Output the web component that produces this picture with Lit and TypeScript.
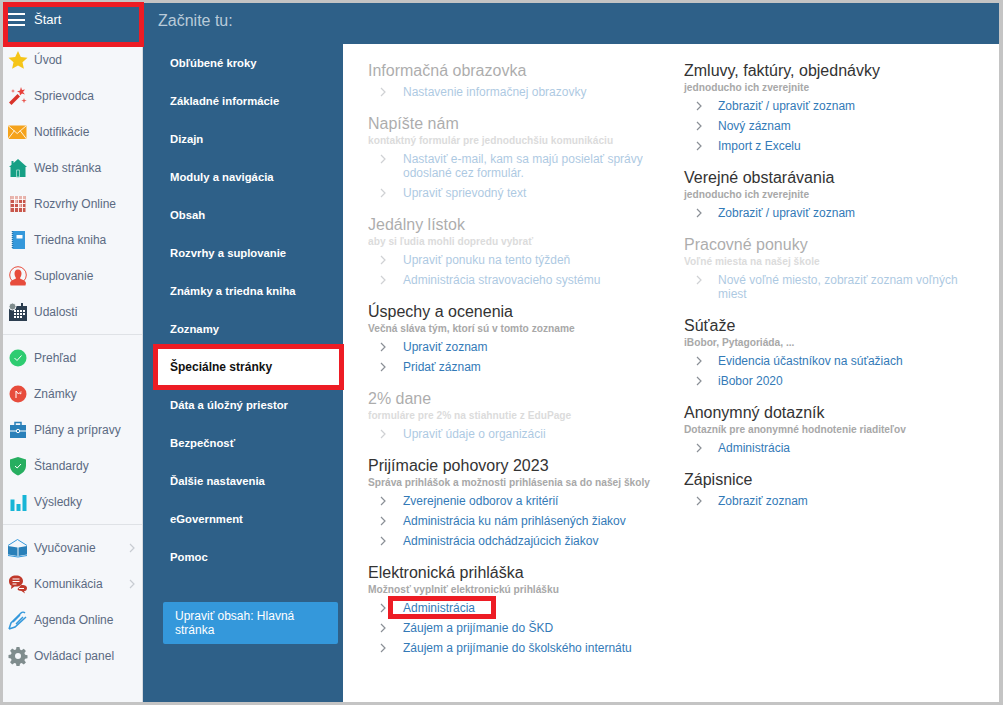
import { LitElement, html, css, svg } from "lit";
import { customElement } from "lit/decorators.js";

const ic: Record<string, unknown> = {
  star: svg`<path fill="#f5c518" d="M10 1l2.800 6 6.700.7-5 4.500 1.400 6.600L10 15.500 4.100 18.800l1.400-6.600-5-4.500 6.700-.7z"/>`,
  wand: svg`<path fill="#d9342b" d="M1 16.500l8.500-8.500 2.500 2.500-8.500 8.500z"/><path fill="#e8403a" d="M13 1l1 3 3-.5-2 2.500 2 2.500-3-1-2 2-.5-3-2.500-1 3-1z"/><path fill="#e8574f" d="M16 12l.7 2 2 .5-2 .7-.7 2-.7-2-2-.7 2-.5zM5 3l.5 1.500L7 5l-1.500.5L5 7l-.5-1.500L3 5l1.500-.5z"/>`,
  mail: svg`<path fill="#f5a31c" d="M0 3.500h18.500v13.500H0z"/><path fill="none" stroke="#fff3dc" stroke-width="1" d="M0 3.500l9.200 8 9.300-8M0 17l6.500-8.500M18.500 17L12 8.500"/>`,
  home: svg`<path fill="#16a085" d="M10 1l9 8h-1.500v10h-15V9H1l2.500-2.300V3h2v2z"/><path fill="none" stroke="#8fd6c6" d="M8.500 12h3v7h-3z"/>`,
  grid: svg`<path fill="#c8564b" d="M2.500 2h15v16h-15z"/><path fill="#e8b5ae" d="M2.500 2h15v3h-15zM10 9h3.500v4H10zM6 5.500h3.500v3.500H6z"/><path stroke="#fff" stroke-width=".9" d="M2.500 5.500h15M2.500 9.500h15M2.500 13.500h15M6.500 2v16M10.500 2v16M14.500 2v16" fill="none"/>`,
  book: svg`<path fill="#3498db" d="M4.500 1H17v18H4.500z"/><path fill="#fff" d="M8.500 5h6v3.500h-6z"/><path stroke="#1f6fa8" stroke-width="1.500" stroke-dasharray="1 1" d="M4.500 1v18"/>`,
  person: svg`<circle cx="10" cy="9" r="8.300" fill="none" stroke="#e74c3c"/><path fill="#e74c3c" d="M10 3.500c2.500 0 3.500 2 3.500 4 0 2-1 3.500-1.500 4.500 0 1.500 5 1.500 6 5l-.5 2.500h-15L2 17c1-3.500 6-3.500 6-5-.5-1-1.500-2.500-1.500-4.500s1-4 3.500-4z"/>`,
  cal: svg`<path fill="#2c3e50" d="M1 4h18v15H1z"/><circle cx="4.500" cy="4.500" r="3.500" fill="#7f8c8d" stroke="#f5f7fa"/><path fill="#2c3e50" d="M13 1h2v4h-2z"/><path fill="#fff" d="M6 8h2v2H6zM9 8h2v2H9zM12 8h2v2h-2zM15 8h2v2h-2zM6 11h2v2H6zM9 11h2v2H9zM12 11h2v2h-2zM15 11h2v2h-2zM6 14h2v2H6zM9 14h2v2H9zM12 14h2v2h-2z"/>`,
  check: svg`<circle cx="10" cy="10" r="8.500" fill="#2ecc71"/><path fill="none" stroke="#fff" d="M6.500 10l2.500 2.500 4.500-5"/>`,
  marks: svg`<circle cx="10" cy="10" r="8.500" fill="#e74c3c"/><path fill="none" stroke="#fff" d="M8 14V7l2.500 3L13 7.500M12 10l1.500-1"/>`,
  case: svg`<path fill="#2980b9" d="M2 5h16v13H2z"/><path fill="none" stroke="#2980b9" stroke-width="1.500" d="M7 5V2.500h6V5"/><path stroke="#fff" d="M2 11h6M12 11h6" fill="none"/><circle cx="10" cy="11" r="1.700" fill="none" stroke="#fff"/>`,
  shield: svg`<path fill="#27ae60" d="M10 1l8 2.500v6c0 5-3.500 8-8 10-4.500-2-8-5-8-10v-6z"/><path fill="none" stroke="#fff" d="M7 10l2.200 2L13 8"/>`,
  bars: svg`<path fill="#17b5d6" d="M2.500 7.500h4V19h-4zM8.500 12h4v7h-4zM14.500 3h4v16h-4z"/>`,
  open: svg`<path fill="#2980b9" d="M0 8l9.500 1.500v8.500L0 16.500zM19 8l-8.500 1.500V18l8.500-1.500z"/><path fill="none" stroke="#3498db" d="M0 7.500l9.500-6 9.500 6M0 17.500l10 1.500 9-1.500"/>`,
  chat: svg`<path fill="#c0392b" d="M8 1.500c4 0 7 2 7 5.500s-3 5.500-7 5.500H6.500L3 15l.5-3.200C1.500 10.800 1 9 1 7c0-3.500 3-5.500 7-5.500z"/><path fill="#c0392b" d="M13 11c3 0 6 .5 6 3s-1.500 3-3 3l1 2.500-3.500-2.500c-2 0-4-.7-4-2z"/><path stroke="#fff" stroke-width="1.200" fill="none" d="M4.500 5h7M4.500 7.500h7M4.500 10h4M11 14.500h5"/>`,
  pen: svg`<path fill="none" stroke="#3498db" stroke-width="1.500" d="M1 19l2-6L13 3c1-1 3-1 4 0M1 19l6-2L18 7M5 12l7-7M8 14l7-7"/>`,
  gear: svg`<path fill="#7f8c8d" fill-rule="evenodd" d="M8.500 1h3l.5 2.600 1.600.7 2.200-1.500 2.100 2.100-1.500 2.200.7 1.600 2.400.5v3l-2.400.5-.7 1.600 1.500 2.200-2.100 2.100-2.200-1.500-1.600.7-.5 2.500h-3L8 17.600l-1.600-.7-2.200 1.500-2.100-2.100 1.500-2.200-.7-1.600-2.400-.5v-3l2.400-.5.7-1.600-1.500-2.200 2.100-2.100 2.200 1.500L8 3.600zM10 7a3 3 0 100 6 3 3 0 000-6z"/>`,
};

type Item = { t: string; i: string; more?: boolean };
const side: Item[][] = [
  [
    { t: "Úvod", i: "star" }, { t: "Sprievodca", i: "wand" }, { t: "Notifikácie", i: "mail" },
    { t: "Web stránka", i: "home" }, { t: "Rozvrhy Online", i: "grid" }, { t: "Triedna kniha", i: "book" },
    { t: "Suplovanie", i: "person" }, { t: "Udalosti", i: "cal" },
  ],
  [
    { t: "Prehľad", i: "check" }, { t: "Známky", i: "marks" }, { t: "Plány a prípravy", i: "case" },
    { t: "Štandardy", i: "shield" }, { t: "Výsledky", i: "bars" },
  ],
  [
    { t: "Vyučovanie", i: "open", more: true }, { t: "Komunikácia", i: "chat", more: true },
    { t: "Agenda Online", i: "pen" }, { t: "Ovládací panel", i: "gear" },
  ],
];

const nav = ["Obľúbené kroky", "Základné informácie", "Dizajn", "Moduly a navigácia", "Obsah", "Rozvrhy a suplovanie",
  "Známky a triedna kniha", "Zoznamy", "Špeciálne stránky", "Dáta a úložný priestor", "Bezpečnosť", "Ďalšie nastavenia", "eGovernment", "Pomoc"];

type Group = { h: string; s?: string; l: string[]; off?: boolean; mark?: string };
const col1: Group[] = [
  { h: "Informačná obrazovka", l: ["Nastavenie informačnej obrazovky"], off: true },
  { h: "Napíšte nám", s: "kontaktný formulár pre jednoduchšiu komunikáciu", l: ["Nastaviť e-mail, kam sa majú posielať správy odoslané cez formulár.", "Upraviť sprievodný text"], off: true },
  { h: "Jedálny lístok", s: "aby si ľudia mohli dopredu vybrať", l: ["Upraviť ponuku na tento týždeň", "Administrácia stravovacieho systému"], off: true },
  { h: "Úspechy a ocenenia", s: "Večná sláva tým, ktorí sú v tomto zozname", l: ["Upraviť zoznam", "Pridať záznam"] },
  { h: "2% dane", s: "formuláre pre 2% na stiahnutie z EduPage", l: ["Upraviť údaje o organizácii"], off: true },
  { h: "Prijímacie pohovory 2023", s: "Správa prihlášok a možnosti prihlásenia sa do našej školy", l: ["Zverejnenie odborov a kritérií", "Administrácia ku nám prihlásených žiakov", "Administrácia odchádzajúcich žiakov"] },
  { h: "Elektronická prihláška", s: "Možnosť vyplniť elektronickú prihlášku", l: ["Administrácia", "Záujem a prijímanie do ŠKD", "Záujem a prijímanie do školského internátu"], mark: "Administrácia" },
];
const col2: Group[] = [
  { h: "Zmluvy, faktúry, objednávky", s: "jednoducho ich zverejnite", l: ["Zobraziť / upraviť zoznam", "Nový záznam", "Import z Excelu"] },
  { h: "Verejné obstarávania", s: "jednoducho ich zverejnite", l: ["Zobraziť / upraviť zoznam"] },
  { h: "Pracovné ponuky", s: "Voľné miesta na našej škole", l: ["Nové voľné miesto, zobraziť zoznam voľných miest"], off: true },
  { h: "Súťaže", s: "iBobor, Pytagoriáda, ...", l: ["Evidencia účastníkov na súťažiach", "iBobor 2020"] },
  { h: "Anonymný dotazník", s: "Dotazník pre anonymné hodnotenie riaditeľov", l: ["Administrácia"] },
  { h: "Zápisnice", l: ["Zobraziť zoznam"] },
];

const chev = (c: string) => html`<svg class=${c} viewBox="0 0 6 10" width="6" height="10"><path d="M1 1l4 4-4 4" fill="none" stroke="currentColor" stroke-width="1.200"/></svg>`;

@customElement("app-root")
export class AppRoot extends LitElement {
  static styles = css`
    :host { display: block; width: 1003px; height: 705px; background: #c4c4c4; font-family: "Liberation Sans", Arial, sans-serif; overflow: hidden; }
    .app { display: flex; flex-direction: column; width: 996px; height: 699px; margin: 3px 0 0 3px; background: #fff; }
    .body { flex: 1; display: flex; min-height: 0; }
    .top { display: flex; height: 41px; background: #2e6088; flex: none; }
    .brand { width: 140px; box-sizing: border-box; display: flex; padding: 9px 0 0 5px; gap: 9px; color: #fff; font-size: 13px; position: relative; }
    .brand::after { content: ""; position: absolute; left: 0; top: -1px; width: 141px; height: 45px; box-sizing: border-box; border: 5px solid #ed1c24; }
    .burger { width: 17px; height: 13px; margin-top: 1px; border-top: 2px solid #fff; border-bottom: 2px solid #fff; box-sizing: border-box; position: relative; }
    .burger::after { content: ""; position: absolute; left: 0; right: 0; top: 3.500px; height: 2px; background: #fff; }
    .title { padding: 9px 0 0 15px; color: #b9cbd9; font-size: 16px; }
    .side { width: 139px; flex: none; background: #f5f7fa; border-right: 1px solid #d6dae0; }
    .sg { padding: 0 0 4px; }
    .sg + .sg { border-top: 1px solid #dfe2e6; padding-top: 5px; }
    .sg:first-child { margin-top: -2px; }
    .si { height: 36px; display: flex; align-items: center; color: #5b6a82; font-size: 12px; padding-left: 5px; position: relative; }
    .si svg.i { width: 20px; height: 20px; margin-right: 6px; flex: none; }
    .si .more { position: absolute; left: 126px; top: 13px; color: #c8ccd2; }
    .nav { width: 200px; flex: none; background: #2e6088; box-sizing: border-box; display: flex; flex-direction: column; }
    .ni { height: 38px; display: flex; align-items: center; padding: 0 0 1px 16px; margin-left: 11px; color: #fff; font-weight: 700; font-size: 11.300px; flex: none; box-sizing: border-box; }
    .ni.sel { background: #fff; color: #111; font-size: 12px; height: 46px; margin: -4px -1px -4px 10px; padding: 0 0 0 12px; border: 5px solid #ed1c24; position: relative; }
    .btn { margin: 26px 5px 0 20px; height: 42px; box-sizing: border-box; background: #3498db; border-radius: 2px; color: #fff; font-size: 12px; line-height: 14px; padding: 7px 12px; }
    .main { flex: 1; display: flex; padding: 17px 0 0 25px; }
    .col { width: 316px; flex: none; }
    .col + .col { width: 290px; }
    .col + .col .l .c { margin-right: 16px; }
    .g { margin-bottom: 12px; }
    .g.off { opacity: .4; }
    h3 { margin: 0; font-weight: 400; font-size: 16px; line-height: 20px; color: #333; }
    .s { font-size: 10.200px; font-weight: 700; color: #a8a8a8; line-height: 12px; margin: 1px 0 2px; }
    .g.nos .ls { margin-top: 1px; }
    .l { display: flex; font-size: 12px; line-height: 14px; padding: 3px 0; color: #337ab7; }
    .l .c { margin: 2px 17px 0 12px; flex: none; color: #8a8f96; }
    .lt { flex: 1; }
    .mark { position: relative; }
    .mark::after { content: ""; position: absolute; left: -15px; top: -5px; width: 108px; height: 23px; box-sizing: border-box; border: 5px solid #ed1c24; }
  `;

  private group(g: Group) {
    return html`<div class="g ${g.off ? "off" : ""} ${g.s ? "" : "nos"}">
      <h3>${g.h}</h3>
      ${g.s ? html`<div class="s">${g.s}</div>` : ""}
      <div class="ls">
        ${g.l.map((t) => html`<div class="l">${chev("c")}<div class="lt"><span class=${g.mark === t ? "mark" : ""}>${t}</span></div></div>`)}
      </div>
    </div>`;
  }

  render() {
    return html`<div class="app">
      <div class="top">
        <div class="brand"><div class="burger"></div><span>Štart</span></div>
        <div class="title">Začnite tu:</div>
      </div>
      <div class="body">
        <div class="side">
          ${side.map((g) => html`<div class="sg">
            ${g.map((it) => html`<div class="si">
              <svg class="i" viewBox="0 0 20 20">${ic[it.i]}</svg>${it.t}${it.more ? chev("more") : ""}
            </div>`)}
          </div>`)}
        </div>
        <div class="nav">
          ${nav.map((n) => html`<div class="ni ${n === "Špeciálne stránky" ? "sel" : ""}">${n}</div>`)}
          <div class="btn">Upraviť obsah: Hlavná stránka</div>
        </div>
        <div class="main">
          <div class="col">${col1.map((g) => this.group(g))}</div>
          <div class="col">${col2.map((g) => this.group(g))}</div>
        </div>
      </div>
    </div>`;
  }
}
